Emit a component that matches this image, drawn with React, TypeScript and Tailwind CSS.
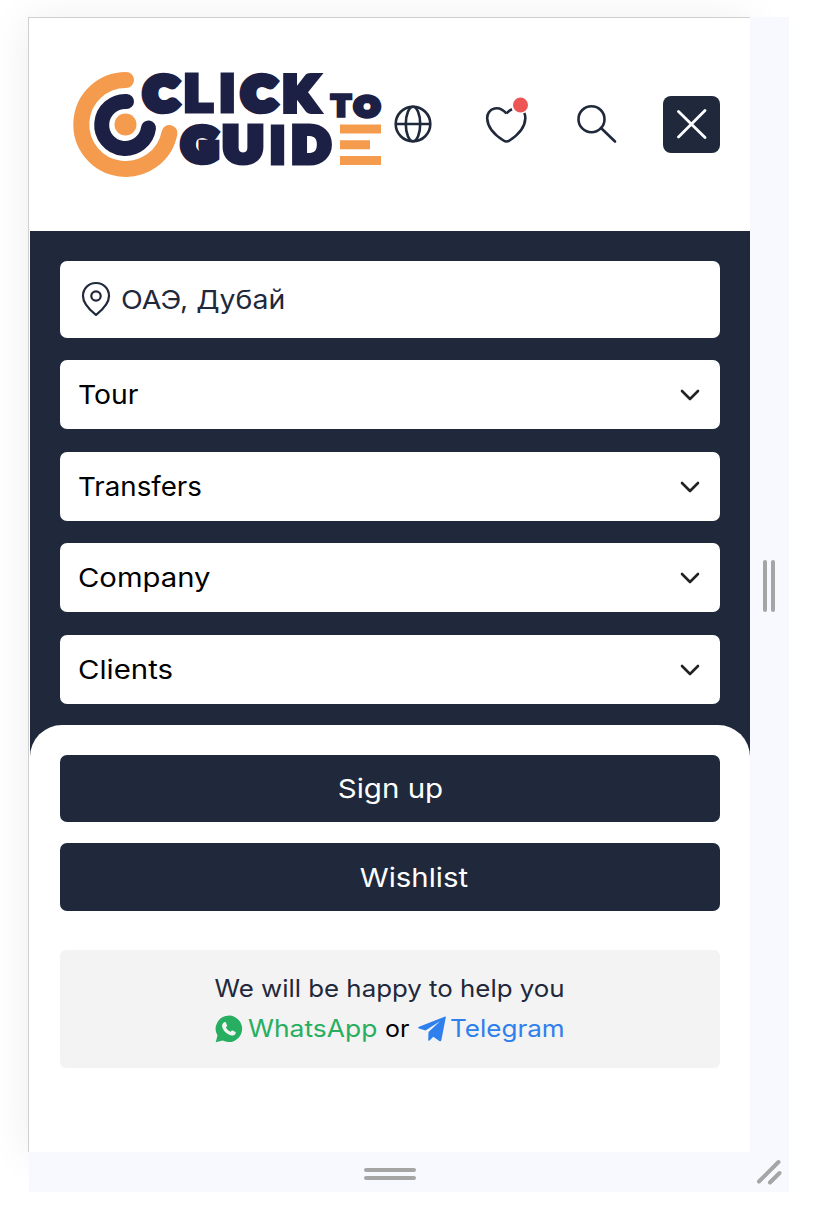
import React from 'react';

type Glyph = { char: string; x: number; y: number; width: number; size: number; stroke: number };

const glyphs: Glyph[] = [
  { char: 'C', x: 71.4, y: 37.5, width: 32.2, size: 45, stroke: 8.5 },
  { char: 'L', x: 110.6, y: 39, width: 28.5, size: 49, stroke: 5 },
  { char: 'I', x: 146.3, y: 39, width: 16, size: 49, stroke: 5 },
  { char: 'C', x: 169.4, y: 37.5, width: 32.2, size: 45, stroke: 8.5 },
  { char: 'K', x: 209.5, y: 38.5, width: 35, size: 48, stroke: 6 },
  { char: 'G', x: 109.4, y: 89, width: 34.5, size: 45, stroke: 8.5 },
  { char: 'U', x: 150, y: 89.5, width: 40, size: 47, stroke: 7 },
  { char: 'I', x: 196.5, y: 90.5, width: 16, size: 49, stroke: 5 },
  { char: 'D', x: 219, y: 89.5, width: 38, size: 47, stroke: 7 },
  { char: 'T', x: 258.2, y: 44.2, width: 19.6, size: 29, stroke: 3.5 },
  { char: 'O', x: 281.8, y: 43.5, width: 24.5, size: 27, stroke: 5.5 },
];

function Logo() {
  return (
    <svg width="308" height="106" viewBox="0 0 308 106" className="shrink-0 overflow-visible" aria-label="Click to Guide">
      <g fill="none" strokeLinecap="round">
        <path d="M53 8A44.5 44.5 0 1 0 96.500 61" stroke="#f59b4e" strokeWidth="16" />
        <path d="M53.500 29.500A23.500 23.500 0 1 0 75.500 56" stroke="#1d2045" strokeWidth="15" />
      </g>
      <circle cx="52.500" cy="52.500" r="11" fill="#f59b4e" />
      <g fill="#1d2045" stroke="#1d2045" className="font-['Lato',sans-serif] font-black">
        {glyphs.map((g, i) => (
          <text key={i} x={g.x} y={g.y} fontSize={g.size} strokeWidth={g.stroke} textLength={g.width} lengthAdjust="spacingAndGlyphs">
            {g.char}
          </text>
        ))}
      </g>
      <path d="M267 52.500h41v9h-41zM267 68.300h30v9h-30zM267 84h41v9h-41z" fill="#f59b4e" />
    </svg>
  );
}

function Header() {
  return (
    <header className="flex h-[213px] items-start pl-[44px] pt-[54px]">
      <Logo />
      <svg width="40" height="40" viewBox="0 0 40 40" className="ml-[12px] mt-[32px] shrink-0" fill="none" stroke="#1f293b" strokeWidth="2.6">
        <circle cx="20" cy="20" r="17.300" />
        <ellipse cx="20" cy="20" rx="7.200" ry="17.300" />
        <path d="M2.700 20h34.600" />
      </svg>
      <svg width="46" height="48" viewBox="0 0 46 48" className="ml-[51px] mt-[24px] shrink-0" fill="none">
        <path d="M22.500 17.500C18.500 13 14.500 11.500 10.500 12.500C5.500 13.500 3 18 3.200 22.500C3.600 31.500 11.500 39.500 19.500 44.500Q22.500 46.500 25.500 44.500C34 39 41 31 41.300 22.500C41.400 20.500 41 18.500 40.300 17M22.500 17.500Q25 14.500 28 13.200" stroke="#1f293b" strokeWidth="2.600" strokeLinejoin="round" />
        <circle cx="36.500" cy="9" r="7.500" fill="#ee5656" />
      </svg>
      <svg width="42" height="42" viewBox="0 0 42 42" className="ml-[46px] mt-[31px] shrink-0" fill="none" stroke="#1f293b" strokeWidth="2.6" strokeLinecap="round">
        <circle cx="15.500" cy="16.200" r="13" />
        <path d="m25 25 14 13.500" />
      </svg>
      <div className="ml-[45px] mt-[24px] flex size-[57px] shrink-0 items-center justify-center rounded-lg bg-[#1f293b]">
        <svg width="31" height="31" viewBox="0 0 31 31" stroke="white" strokeWidth="2.8" strokeLinecap="round">
          <path d="m2.500 2.500 26.500 26M29 1.500l-26.500 26.500" />
        </svg>
      </div>
    </header>
  );
}

function MenuRow({ label, stretch }: { label: string; stretch: string }) {
  return (
    <button className="flex h-[69px] w-full items-center justify-between rounded-[7px] bg-white pl-[18px] pr-[20px] text-[26px] leading-none text-black">
      <span className={`mt-px inline-block origin-left ${stretch}`}>{label}</span>
      <svg width="20" height="12" viewBox="0 0 20 12" fill="none" stroke="#222" strokeWidth="2.6" strokeLinecap="round" strokeLinejoin="round" className="mt-px">
        <path d="m2 2 8 8 8-8" />
      </svg>
    </button>
  );
}

function Navigation() {
  return (
    <nav className="ml-px h-[493.500px] bg-[#1f293b] px-[30px] pt-[30px]">
      <div className="mb-[22.500px] flex h-[76.500px] items-center rounded-[7px] bg-white pl-[21px] text-[#1f293b]">
        <svg width="30" height="36" viewBox="0 0 30 36" fill="none" stroke="currentColor" strokeWidth="2.2">
          <path d="M15 34C12 31.500 2 24 2 15C2 7.500 7.500 2 15 2S28 7.500 28 15C28 24 18 31.500 15 34Z" strokeLinejoin="round" />
          <circle cx="15" cy="15" r="4.700" />
        </svg>
        <span className="ml-[10px] mt-[2px] inline-block origin-left scale-x-[1.095] text-[26px] leading-none">ОАЭ, Дубай</span>
      </div>
      <div className="flex flex-col gap-[22.500px]">
        <MenuRow label="Tour" stretch="scale-x-[1.09]" />
        <MenuRow label="Transfers" stretch="scale-x-[1.065]" />
        <MenuRow label="Company" stretch="scale-x-[1.125]" />
        <MenuRow label="Clients" stretch="scale-x-[1.13]" />
      </div>
    </nav>
  );
}

function Help() {
  return (
    <section className="mt-[39px] flex h-[118px] flex-col items-center rounded-[6px] bg-[#f3f3f3] pt-[19px] text-[24px] leading-[40px] text-[#1f293b]">
      <p className="scale-x-[1.077] whitespace-nowrap">We will be happy to help you</p>
      <p className="flex w-[350px] items-center whitespace-nowrap">
        <svg width="28" height="28" viewBox="0 0 28 28" className="shrink-0">
          <path d="M14 .5A13.300 13.300 0 0 0 2.500 20.500L.7 27.300l7-1.700A13.300 13.300 0 1 0 14 .5Z" fill="#27ae60" />
          <path d="M9.200 7.300c.7-.5 1.400-.3 1.700.3l1.100 2.600c.2.600-.1 1.200-1.100 2.200 1 1.900 2.500 3.400 4.700 4.400 1-1.200 1.400-1.500 2-1.200l2.500 1.200c.8.400.8.900.5 1.600-.6 1.600-2.400 2.300-4 2.100-4.500-.9-8.700-4.900-9.500-9-.2-1.600.5-3.200 2.100-4.200Z" fill="#f3f3f3" />
        </svg>
        <span className="ml-[5px] w-[131px]"><span className="inline-block origin-left scale-x-[1.1] text-[#27ae60]">WhatsApp</span></span>
        <span className="ml-[6px] w-[25px]"><span className="inline-block origin-left scale-x-[1.04] text-black">or</span></span>
        <svg width="28" height="26" viewBox="0 0 28 26" className="ml-[8px] shrink-0" fill="#2f80ed">
          <path d="M27.200.4 1 10.700c-1.100.5-1.100 1.400 0 1.800l6.500 2.100L22 5.200 10.500 16.100l-.3 8.100c.2.700.8.700 1.300.3l3.800-3.700 6 4.300c1.100.6 1.800.1 2.100-1L27.800 1.200c.1-.6-.1-.9-.6-.8Z" />
        </svg>
        <span className="ml-[4px] inline-block origin-left scale-x-[1.085] text-[#2f80ed]">Telegram</span>
      </p>
    </section>
  );
}

export default function App() {
  return (
    <div className="h-[1222px] w-[818px] overflow-hidden bg-white pl-[28px] pt-[17px] font-['Inter',sans-serif]">
      <div className="flex h-[1135px] w-[761px]">
        <main className="h-[1135px] w-[722px] shrink-0 border-l border-t border-[#cfcfcf] bg-white shadow-[0_3px_40px_rgba(0,0,0,0.075)]">
          <Header />
          <Navigation />
          <div className="ml-px bg-[#1f293b]">
            <div className="rounded-t-[32px] bg-white px-[30px] pt-[30px]">
              <button className="flex h-[67.500px] w-full items-center justify-center rounded-[7px] bg-[#1f293b] text-[26px] leading-none text-white">
                <span className="mt-px inline-block scale-x-[1.135]">Sign up</span>
              </button>
              <button className="mt-[21px] flex h-[67.500px] w-full items-center justify-center rounded-[7px] bg-[#1f293b] pl-[47px] text-[26px] leading-none text-white">
                <span className="mt-[2px] inline-block scale-x-[1.13]">Wishlist</span>
              </button>
              <Help />
            </div>
          </div>
        </main>
        <div className="relative flex w-[39px] items-center justify-center gap-[4px] bg-[#f8f9fe] pr-px pt-[2px]">
          <span className="h-[52px] w-[4px] rounded-full bg-[#a5a5a5]" />
          <span className="h-[52px] w-[4px] rounded-full bg-[#a5a5a5]" />
        </div>
      </div>
      <div className="relative ml-px flex h-[40px] w-[760px] items-center bg-[#f8f9fe]">
        <div className="ml-[335px] mt-[4px] flex w-[52px] flex-col gap-[4px]">
          <span className="h-[4px] rounded-full bg-[#a5a5a5]" />
          <span className="h-[4px] rounded-full bg-[#a5a5a5]" />
        </div>
        <svg width="26" height="26" viewBox="0 0 26 26" className="ml-auto mr-[7px]" stroke="#a5a5a5" strokeWidth="4" strokeLinecap="round">
          <path d="M3 22.500 22.500 3M14 23.500l9.500-9.500" />
        </svg>
      </div>
    </div>
  );
}
